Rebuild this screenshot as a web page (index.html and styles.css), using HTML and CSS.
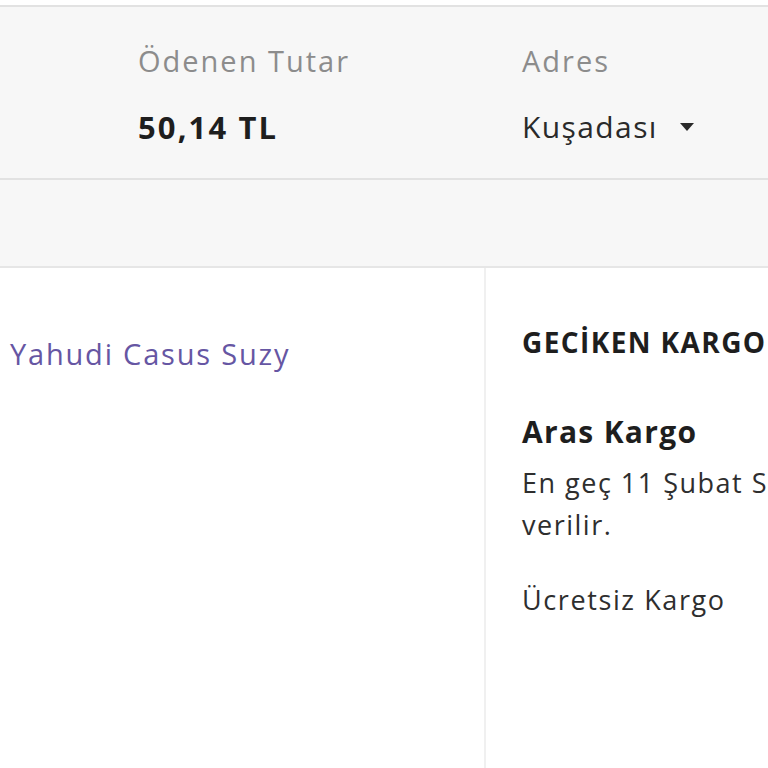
FILE: index.html
```html
<!DOCTYPE html>
<html lang="tr">
<head>
<meta charset="utf-8">
<link rel="stylesheet" href="styles.css">
</head>
<body>
<div class="page">
  <div class="top-gap"></div>
  <section class="summary">
    <div class="field field-amount">
      <div class="label">Ödenen Tutar</div>
      <div class="value value-bold">50,14 TL</div>
    </div>
    <div class="field field-address">
      <div class="label">Adres</div>
      <div class="value value-select">Kuşadası <span class="caret"></span></div>
    </div>
  </section>
  <div class="band"></div>
  <section class="content">
    <div class="left">
      <a class="seller">Yahudi Casus Suzy</a>
    </div>
    <div class="right">
      <div class="status">GECİKEN KARGO</div>
      <div class="carrier">Aras Kargo</div>
      <div class="desc">En geç 11 Şubat Salı günü kargoya<br>verilir.</div>
      <div class="shipping">Ücretsiz Kargo</div>
    </div>
  </section>
</div>
</body>
</html>
```

FILE: styles.css
```css
html, body {
  margin: 0;
  padding: 0;
  background: #ffffff;
}
body {
  font-family: "Open Sans", "Noto Sans", sans-serif;
  color: #333333;
  overflow: hidden;
  width: 768px;
  height: 768px;
}
.page {
  width: 768px;
  white-space: nowrap;
}
.top-gap {
  height: 5px;
  background: #ffffff;
}
.summary {
  display: flex;
  background: #f7f7f7;
  border-top: 2px solid #e2e2e2;
  border-bottom: 2px solid #e2e2e2;
  height: 175px;
  box-sizing: border-box;
  padding: 34px 0 0 138px;
}
.field-amount {
  width: 384px;
}
.label {
  font-size: 29px;
  line-height: 40px;
  color: #8c8c8c;
  letter-spacing: 2px;
}
.value {
  margin-top: 26px;
  font-size: 30px;
  line-height: 40px;
  color: #2a2a2a;
  letter-spacing: 1.4px;
}
.value-bold {
  font-weight: 700;
  color: #1e1e1e;
  font-size: 31px;
  letter-spacing: 2.1px;
}
.caret {
  display: inline-block;
  width: 0;
  height: 0;
  border-left: 7px solid transparent;
  border-right: 7px solid transparent;
  border-top: 8px solid #2a2a2a;
  margin-left: 13px;
  vertical-align: 7px;
}
.band {
  height: 86px;
  background: #f7f7f7;
  border-bottom: 2px solid #e6e6e6;
}
.content {
  display: flex;
  height: 520px;
}
.left {
  width: 486px;
  border-right: 2px solid #f0f0f0;
  padding: 66px 0 0 10px;
  box-sizing: border-box;
}
.seller {
  font-size: 29px;
  line-height: 40px;
  color: #6656a3;
  letter-spacing: 1.8px;
}
.right {
  padding: 54px 0 0 36px;
  overflow: hidden;
  flex: 1;
}
.status {
  font-size: 28px;
  font-weight: 700;
  line-height: 40px;
  color: #1e1e1e;
  letter-spacing: 1.4px;
}
.carrier {
  margin-top: 50px;
  font-size: 30px;
  font-weight: 700;
  line-height: 40px;
  color: #1e1e1e;
  letter-spacing: 1.3px;
}
.desc {
  margin-top: 10px;
  font-size: 27px;
  line-height: 42px;
  color: #2e2e2e;
  letter-spacing: 1.5px;
}
.shipping {
  margin-top: 34px;
  font-size: 27px;
  line-height: 40px;
  color: #2e2e2e;
  letter-spacing: 1.6px;
}
```
